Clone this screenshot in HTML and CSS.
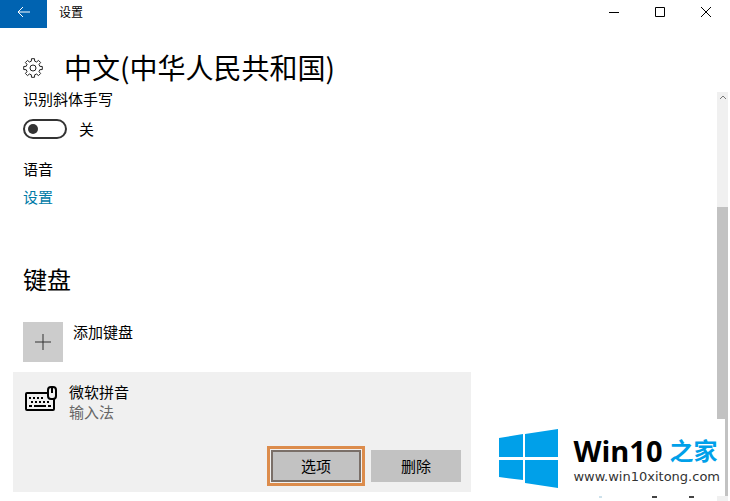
FILE: index.html
```html
<!DOCTYPE html>
<html lang="zh-CN">
<head>
    <meta charset="UTF-8">
    <meta name="viewport" content="width=device-width, initial-scale=1.0">
    <title>设置</title>
    <link rel="stylesheet" href="styles.css">
</head>
<body>
    <header class="titlebar">
        <button class="back" aria-label="返回">
            <svg width="14" height="12" viewBox="0 0 14 12"><path d="M13 6H1M6 1L1 6l5 5"/></svg>
        </button>
        <span class="app-name">设置</span>
        <div class="window-controls">
            <button aria-label="最小化"><svg width="12" height="12" viewBox="0 0 12 12"><path d="M1 6.500h10"/></svg></button>
            <button aria-label="最大化"><svg width="12" height="12" viewBox="0 0 12 12"><path d="M1.500 1.500h9v9h-9z"/></svg></button>
            <button aria-label="关闭"><svg width="12" height="12" viewBox="0 0 12 12"><path d="M1 1l10 10M11 1L1 11"/></svg></button>
        </div>
    </header>

    <div class="page-title">
        <svg class="gear" width="20" height="20" viewBox="0 0 20 20">
            <path d="M8.300 3.200L8.500 0.700h3l0.200 2.500 1.900 0.800 1.900-1.600 2.100 2.100-1.600 1.900 0.800 1.900 2.500 0.200v3l-2.500 0.200-0.800 1.900 1.600 1.900-2.100 2.100-1.900-1.600-1.900 0.800-0.200 2.500h-3l-0.200-2.500-1.900-0.800-1.900 1.600-2.100-2.100 1.600-1.900-0.800-1.900-2.500-0.200v-3l2.500-0.200 0.800-1.900-1.600-1.900 2.100-2.100 1.900 1.600z"/>
            <circle cx="10" cy="10" r="3"/>
        </svg>
        <h1>中文(中华人民共和国)</h1>
    </div>

    <div class="view">
        <main>
            <label class="setting-label" for="cursive">识别斜体手写</label>
            <div class="toggle-row">
                <input type="checkbox" class="toggle" id="cursive">
                <span>关</span>
            </div>

            <p class="setting-label speech">语音</p>
            <a href="#" class="link">设置</a>

            <h2>键盘</h2>
            <button class="add-keyboard">
                <span class="plus"><svg width="16" height="16" viewBox="0 0 16 16"><path d="M8 0v16M0 8h16"/></svg></span>
                <span>添加键盘</span>
            </button>

            <section class="keyboard">
                <div class="keyboard-info">
                    <svg class="keyboard-icon" width="34" height="26" viewBox="0 0 34 26">
                        <rect x="2" y="7" width="28" height="17" rx="1" fill="none" stroke="#000" stroke-width="2"/>
                        <path d="M5 12h2M9 12h2M13 12h2M17 12h2M7 16h2M11 16h2M15 16h2M19 16h2M23 16h2M5 20h3M10 20h12M24 20h3" stroke="#000" stroke-width="2"/>
                        <rect x="24" y="1" width="8" height="12" rx="3" fill="#f0f0f0" stroke="#000" stroke-width="2"/>
                        <path d="M28 2v5" stroke="#000" stroke-width="2"/>
                    </svg>
                    <div>
                        <div class="keyboard-name">微软拼音</div>
                        <div class="keyboard-type">输入法</div>
                    </div>
                </div>
                <div class="actions">
                    <button class="btn selected">选项</button>
                    <button class="btn">删除</button>
                </div>
            </section>
        </main>
        <div class="scrollbar">
            <svg width="11" height="11" viewBox="0 0 11 11"><path d="M3 7l3-3 3 3"/></svg>
            <div class="thumb"></div>
        </div>
    </div>

    <div class="watermark">
        <svg width="60" height="60" viewBox="0 0 60 60">
            <path d="M0 9l24-4v23H0zM26 5l33-5v28H26zM0 31h24v20L0 48zM26 31h33v28l-33-5z" fill="#00a0e9"/>
        </svg>
        <div>
            <div class="brand">Win10<span>之家</span></div>
            <div class="site">www.win10xitong.com</div>
        </div>
        <svg class="specks" width="96" height="2" viewBox="0 0 96 2">
            <path d="M0 1h3" stroke="#9cc4d8"/>
            <path d="M53 1h5M90 1h5" stroke="#444" stroke-width="2"/>
        </svg>
    </div>
</body>
</html>
```
FILE: styles.css
```css
* {
    box-sizing: border-box;
}
body {
    font-family: "Noto Sans CJK SC", sans-serif;
    font-size: 15px;
    line-height: 20px;
    color: #000;
    background-color: #fff;
    margin: 0;
    height: 100vh;
    display: flex;
    flex-direction: column;
    overflow: hidden;
}
button {
    font: inherit;
    color: inherit;
    border: none;
    padding: 0;
    background: none;
}
svg {
    display: block;
}
h1, h2, p {
    margin: 0;
    font-weight: 400;
}

/* title bar */
.titlebar {
    display: flex;
    height: 28px;
    flex: none;
}
.back {
    width: 47px;
    padding-bottom: 4px;
    background-color: #0063b1;
    display: flex;
    align-items: center;
    justify-content: center;
}
.back path {
    fill: none;
    stroke: #fff;
}
.app-name {
    margin-left: 12px;
    font-size: 12px;
    line-height: 24px;
}
.window-controls {
    display: flex;
    margin-left: auto;
    margin-right: 1px;
    height: 24px;
}
.window-controls button {
    width: 46px;
    display: flex;
    align-items: center;
    justify-content: center;
}
.window-controls path {
    fill: none;
    stroke: #000;
}

.page-title {
    display: flex;
    align-items: center;
    gap: 21px;
    height: 60px;
    padding: 20px 23px 0;
    flex: none;
}
.page-title h1 {
    margin-bottom: 3px;
    font-size: 28px;
    line-height: 40px;
}
.gear {
    fill: none;
    stroke: #222;
}

/* scrolling part */
.view {
    display: flex;
    flex: 1;
    min-height: 0;
    padding-right: 2px;
}
main {
    flex: 1;
    padding: 1px 13px 0;
    overflow: hidden;
}
.setting-label, .toggle-row, .link, h2, .add-keyboard {
    margin-left: 10px;
}
.setting-label {
    display: block;
}
.toggle-row {
    display: flex;
    align-items: center;
    gap: 12px;
    margin-top: 10px;
}
.toggle {
    appearance: none;
    width: 44px;
    height: 20px;
    margin: 0;
    padding: 3px;
    border: 2px solid #333;
    border-radius: 10px;
}
.toggle::before {
    content: "";
    display: block;
    width: 10px;
    height: 10px;
    border-radius: 50%;
    background-color: #333;
}
.toggle:checked::before {
    margin-left: auto;
}
.speech {
    margin-top: 20px;
}
.link {
    display: inline-block;
    margin-top: 8px;
    color: #007ba7;
    text-decoration: none;
}
h2 {
    margin-top: 56px;
    font-size: 24px;
    line-height: 32px;
}
.add-keyboard {
    display: flex;
    gap: 10px;
    margin-top: 27px;
}
.plus {
    width: 40px;
    height: 40px;
    background-color: #ccc;
    display: flex;
    align-items: center;
    justify-content: center;
}
.plus path {
    stroke: #333;
}
.keyboard {
    width: 458px;
    max-width: 100%;
    height: 120px;
    margin-top: 10px;
    padding: 10px 10px 10px 11px;
    background-color: #f0f0f0;
    display: flex;
    flex-direction: column;
    justify-content: space-between;
}
.keyboard-info {
    display: flex;
    gap: 11px;
}
.keyboard-icon {
    margin-top: 4px;
}
.keyboard-type {
    color: #666;
}
.actions {
    display: flex;
    justify-content: flex-end;
    gap: 10px;
}
.btn {
    width: 90px;
    height: 32px;
    background-color: #c2c2c2;
}
.btn.selected {
    border: 2px solid #7a6f68;
    outline: 3px solid #dc8c4c;
    outline-offset: 1px;
}

.scrollbar {
    width: 11px;
    margin-top: 4px;
    background-color: #f0f0f0;
    display: flex;
    flex-direction: column;
}
.scrollbar path {
    fill: none;
    stroke: #777;
}
.thumb {
    margin-top: 104px;
    margin-bottom: 5px;
    flex: 1;
    background-color: #c2c2c2;
}

.watermark {
    position: absolute;
    right: 5px;
    bottom: 5px;
    height: 77px;
    padding: 2px 5px 0 0;
    background-color: #fff;
    display: flex;
    align-items: center;
    gap: 14px;
}
.brand {
    display: flex;
    gap: 7px;
    font-family: "Open Sans", "Noto Sans CJK SC", sans-serif;
    font-size: 29px;
    line-height: 36px;
    font-weight: 700;
}
.brand span {
    font-size: 24px;
    color: #00a0e9;
}
.site {
    font-family: "DejaVu Sans", sans-serif;
    font-size: 13px;
    line-height: 16px;
    color: #333;
}
.specks {
    position: absolute;
    left: 100px;
    top: 100%;
}
```
